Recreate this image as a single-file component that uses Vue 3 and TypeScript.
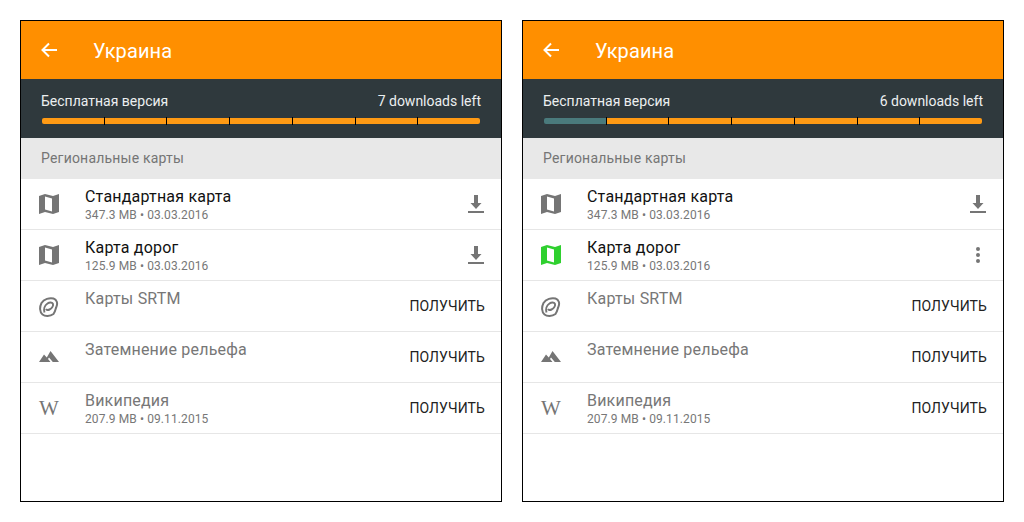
<template>
  <div class="page">
    <section v-for="screen in screens" :key="screen.left" class="phone">
      <header class="toolbar">
        <svg class="back" viewBox="0 0 18 18" fill="none" stroke="#fff" stroke-width="2">
          <path d="M17 9H2.500M9 2.500 2.500 9l6.500 6.500" />
        </svg>
        <h1>Украина</h1>
      </header>

      <div class="free">
        <div class="free-top">
          <span>Бесплатная версия</span>
          <span>{{ screen.left }} downloads left</span>
        </div>
        <div class="bar">
          <i v-for="n in 7" :key="n" :class="{ used: n <= 7 - screen.left }"></i>
        </div>
      </div>

      <div class="section-title">Региональные карты</div>

      <div v-for="row in screen.rows" :key="row.title" class="row" :class="{ muted: row.action === 'get' }">
        <div class="icon">
          <svg v-if="row.icon === 'map'" viewBox="0 0 22 22" :fill="row.green ? '#2fd02f' : '#757575'">
            <path fill-rule="evenodd" d="M1 3 7 1 15 3 21 1V19L15 21 7 19 1 21ZM7 3.500V16.500L14 18.500V5.500Z" />
          </svg>
          <svg v-else-if="row.icon === 'srtm'" viewBox="0 0 22 22" fill="none" stroke="#757575" stroke-width="2">
            <path d="M15.500 19C12 21.500 7 21.500 4.500 19.500 1.500 17 1.500 12 3.500 8 6 4 11.500 2.500 15.500 3.500 19 4.500 19.800 8.500 18.500 11.500 17.500 13.500 17.500 16.500 15.500 19Z" />
            <path d="M6.500 17.500C5.500 14.500 6.500 10.500 9.500 8.500 11.500 7 14.500 7 15 9 15.500 11 13.500 13.500 11.500 14.500 10 15.300 8.500 15 8 14" />
          </svg>
          <svg v-else-if="row.icon === 'hill'" viewBox="0 0 22 22" fill="#757575">
            <path d="M1 16 6 8.500 8.800 11.500 12.500 5 21 16H14.800L11 11.500 10 13 12.500 16Z" />
          </svg>
          <span v-else class="wiki">W</span>
        </div>

        <div class="text">
          <div class="title">{{ row.title }}</div>
          <div v-if="row.info" class="info">{{ row.info }}</div>
        </div>

        <button v-if="row.action === 'get'" class="get">ПОЛУЧИТЬ</button>
        <svg v-else-if="row.action === 'download'" class="action" viewBox="0 0 16 20" fill="#757575">
          <path d="M6 1h4v8h3.500L8 15 2.500 9H6zM0 17h16v2H0z" />
        </svg>
        <svg v-else class="action" viewBox="0 0 16 20" fill="#757575">
          <circle cx="8" cy="4" r="2" />
          <circle cx="8" cy="10" r="2" />
          <circle cx="8" cy="16" r="2" />
        </svg>
      </div>
    </section>
  </div>
</template>

<script setup lang="ts">
interface Row {
  icon: string
  title: string
  info?: string
  action: string
  green?: boolean
}

const rowsFor = (roadsLoaded: boolean): Row[] => [
  { icon: 'map', title: 'Стандартная карта', info: '347.3 MB • 03.03.2016', action: 'download' },
  {
    icon: 'map',
    title: 'Карта дорог',
    info: '125.9 MB • 03.03.2016',
    action: roadsLoaded ? 'menu' : 'download',
    green: roadsLoaded
  },
  { icon: 'srtm', title: 'Карты SRTM', action: 'get' },
  { icon: 'hill', title: 'Затемнение рельефа', action: 'get' },
  { icon: 'wiki', title: 'Википедия', info: '207.9 MB • 09.11.2015', action: 'get' }
]

const screens = [
  { left: 7, rows: rowsFor(false) },
  { left: 6, rows: rowsFor(true) }
]
</script>

<style>
html,
body {
  margin: 0;
  background: #fff;
}
</style>

<style scoped>
.page {
  display: flex;
  gap: 20px;
  padding: 20px;
  width: 1024px;
  height: 522px;
  box-sizing: border-box;
  font-family: Roboto, "Liberation Sans", sans-serif;
}

.phone {
  width: 482px;
  height: 482px;
  box-sizing: border-box;
  border: 1px solid #000;
  background: #fff;
}

.toolbar {
  display: flex;
  align-items: center;
  height: 58px;
  background: #ff8f00;
  color: #fff;
}

.back {
  width: 18px;
  height: 18px;
  margin-left: 19px;
}

.toolbar h1 {
  margin: 2px 0 0 35px;
  font-size: 20px;
  font-weight: 400;
  letter-spacing: 0.1px;
}

.free {
  height: 59px;
  box-sizing: border-box;
  padding: 14px 20px 0 20px;
  background: #2f393d;
  color: #eceff0;
  font-size: 14px;
}

.free-top {
  display: flex;
  justify-content: space-between;
  line-height: 17px;
}

.bar {
  display: flex;
  gap: 1px;
  height: 6px;
  margin: 8px 1px 0 1px;
}

.bar i {
  position: relative;
  flex: 1;
  background: #ff9a14;
}

.bar i:first-child {
  border-radius: 2px 0 0 2px;
}

.bar i:last-child {
  border-radius: 0 2px 2px 0;
}

/* black tick between segments, sticks out of the bar a little */
.bar i + i::before {
  content: "";
  position: absolute;
  left: -1px;
  top: -1px;
  bottom: -1px;
  width: 1px;
  background: #000;
}

.bar i.used {
  background: #4a7a7c;
}

.section-title {
  height: 41px;
  line-height: 40px;
  padding-left: 20px;
  background: #e8e8e8;
  color: #757575;
  font-size: 14px;
  letter-spacing: 0.2px;
}

.row {
  display: flex;
  align-items: center;
  height: 51px;
  box-sizing: border-box;
  border-bottom: 1px solid #e6e6e6;
  padding: 0 16px;
}

.icon {
  display: flex;
  align-items: center;
  justify-content: center;
  width: 24px;
  height: 24px;
  margin-right: 24px;
  flex-shrink: 0;
}

.icon svg {
  width: 22px;
  height: 22px;
}

.wiki {
  font-family: "Liberation Serif", serif;
  font-size: 21px;
  color: #757575;
}

.text {
  flex: 1;
  align-self: flex-start;
  padding-top: 8px;
}

.title {
  font-size: 16px;
  line-height: 20px;
  color: #111;
  letter-spacing: 0.2px;
}

.muted .title {
  color: #777;
}

.info {
  margin-top: 1px;
  font-size: 12px;
  line-height: 14px;
  color: #777;
  letter-spacing: 0.1px;
}

.get {
  border: 0;
  padding: 0;
  background: none;
  font: inherit;
  font-size: 14px;
  letter-spacing: 0.1px;
  color: #222;
}

.action {
  width: 16px;
  height: 20px;
  margin-right: 1px;
  flex-shrink: 0;
}
</style>
